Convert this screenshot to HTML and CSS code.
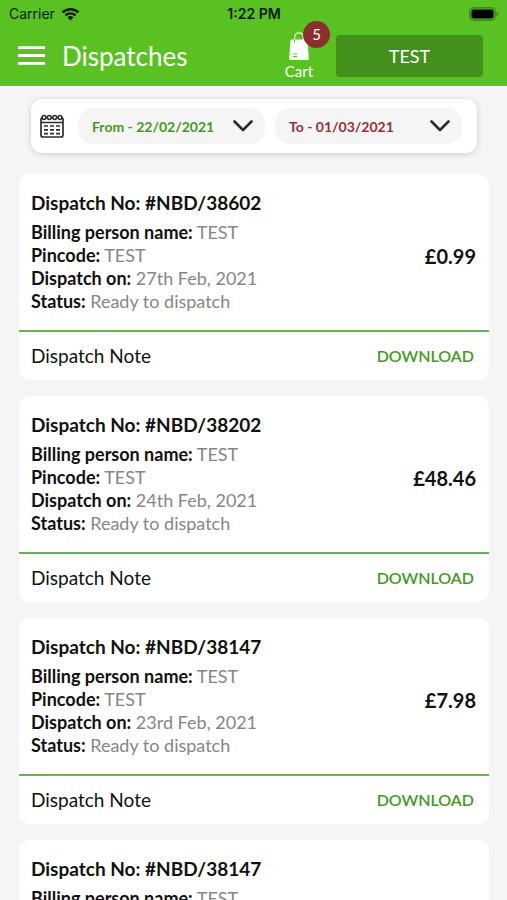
FILE: index.html
```html
<!DOCTYPE html>
<html lang="en">
<head>
<meta charset="utf-8">
<meta name="viewport" content="width=device-width, initial-scale=1">
<title>Dispatches</title>
<link rel="stylesheet" href="styles.css">
</head>
<body>
<div class="app">
  <header class="top">
    <div class="status">
      <span class="carrier">Carrier
        <svg class="wifi" viewBox="0 0 20 14" aria-hidden="true"><path d="M1.6 5.4a12 12 0 0 1 16.8 0M4.7 8.5a7.6 7.6 0 0 1 10.6 0" fill="none" stroke="#0b1a05" stroke-width="2.6"/><path d="M10 13.8 6.9 10.7a4.5 4.5 0 0 1 6.2 0z" fill="#0b1a05"/></svg>
      </span>
      <span class="clock">1:22 PM</span>
      <svg class="battery" viewBox="0 0 30 14" aria-hidden="true"><rect x=".8" y=".8" width="25.4" height="12.4" rx="3.6" fill="none" stroke="#347d14" stroke-width="1.2"/><rect x="2.4" y="2.4" width="22.2" height="9.2" rx="2" fill="#000"/><path d="M27.6 4.6c2 .8 2 4 0 4.8z" fill="#347d14"/></svg>
    </div>
    <div class="bar">
      <button class="menu" aria-label="Menu"><svg viewBox="0 0 27 19" aria-hidden="true"><path d="M0 1.6h27M0 9.5h27M0 17.4h27" stroke="#fff" stroke-width="2.8"/></svg></button>
      <h1>Dispatches</h1>
      <a class="cart" href="#cart">
        <svg viewBox="0 0 20 28" aria-hidden="true"><path d="M5.6 11V5.4c0-6 8.8-6 8.8 0V11" fill="none" stroke="#e4f6da" stroke-width="1.3"/><path d="M2.6 7.4h14.8q1 0 1.1 1l1.3 18q0 1.6-1.6 1.6H1.8Q.2 28 .2 26.400l1.300-18q.1-1 1.100-1z" fill="#fff"/><path d="M5.600 7.400v3.400" stroke="#59c122" stroke-width="1"/><path d="M4 22h4M4 24.500h4" stroke="#59c122" stroke-width="1"/></svg>
        <span>Cart</span>
        <span class="badge">5</span>
      </a>
      <button class="account">TEST</button>
    </div>
  </header>
  <main>
    <section class="filter" aria-label="Date range">
      <svg class="calendar" viewBox="0 0 24 24" aria-hidden="true" fill="none" stroke="#2e2e2e"><rect x="1" y="3.500" width="22" height="19.500" rx="2" stroke-width="1.700"/><path d="M1 8.500h22" stroke-width="1.500"/><g fill="#fff" stroke-width="1.500"><circle cx="4" cy="3.500" r="1.900"/><circle cx="9.300" cy="3.500" r="1.900"/><circle cx="14.700" cy="3.500" r="1.900"/><circle cx="20" cy="3.500" r="1.900"/></g><path d="M4 12h4M10 12h4M16 12h4M4 15.800h4M10 15.800h4M16 15.800h4M4 19.600h4M10 19.600h4M16 19.600h4" stroke-width="1.700"/></svg>
      <button class="date from"><span>From - 22/02/2021</span><svg viewBox="0 0 20 12" aria-hidden="true"><path d="M1.500 1.500 10 10l8.500-8.500"/></svg></button>
      <button class="date to"><span>To - 01/03/2021</span><svg viewBox="0 0 20 12" aria-hidden="true"><path d="M1.500 1.500 10 10l8.500-8.500"/></svg></button>
    </section>
    <article class="card">
      <div class="info">
        <div>
          <h2>Dispatch No: #NBD/38602</h2>
          <p><b>Billing person name:</b> TEST</p>
          <p><b>Pincode:</b> TEST</p>
          <p><b>Dispatch on:</b> 27th Feb, 2021</p>
          <p><b>Status:</b> Ready to dispatch</p>
        </div>
        <strong class="price">£0.99</strong>
      </div>
      <div class="note"><span>Dispatch Note</span><a href="#download">DOWNLOAD</a></div>
    </article>
    <article class="card">
      <div class="info">
        <div>
          <h2>Dispatch No: #NBD/38202</h2>
          <p><b>Billing person name:</b> TEST</p>
          <p><b>Pincode:</b> TEST</p>
          <p><b>Dispatch on:</b> 24th Feb, 2021</p>
          <p><b>Status:</b> Ready to dispatch</p>
        </div>
        <strong class="price">£48.46</strong>
      </div>
      <div class="note"><span>Dispatch Note</span><a href="#download">DOWNLOAD</a></div>
    </article>
    <article class="card">
      <div class="info">
        <div>
          <h2>Dispatch No: #NBD/38147</h2>
          <p><b>Billing person name:</b> TEST</p>
          <p><b>Pincode:</b> TEST</p>
          <p><b>Dispatch on:</b> 23rd Feb, 2021</p>
          <p><b>Status:</b> Ready to dispatch</p>
        </div>
        <strong class="price">£7.98</strong>
      </div>
      <div class="note"><span>Dispatch Note</span><a href="#download">DOWNLOAD</a></div>
    </article>
    <article class="card">
      <div class="info">
        <div>
          <h2>Dispatch No: #NBD/38147</h2>
          <p><b>Billing person name:</b> TEST</p>
        </div>
      </div>
    </article>
  </main>
</div>
</body>
</html>
```
FILE: styles.css
```css
* { box-sizing: border-box; margin: 0; }
body { font-family: Lato, "Liberation Sans", sans-serif; color: #111; background: #f5f5f5; }
button { font: inherit; border: 0; padding: 0; cursor: pointer; }
a { text-decoration: none; }
svg { display: block; flex: none; }

.app { height: 100vh; display: flex; flex-direction: column; overflow: hidden; }

.top { background: #59c122; flex: none; }
.status {
  height: 27px;
  padding: 0 8px 0 9px;
  display: grid;
  grid-template-columns: 1fr auto 1fr;
  align-items: center;
  font-family: Inter, "Liberation Sans", sans-serif;
  font-size: 14px;
  color: #0b1a05;
}
.carrier { display: flex; align-items: center; gap: 6px; }
.wifi { width: 19px; height: 14px; }
.clock { font-weight: 600; }
.battery { width: 30px; height: 14px; justify-self: end; }

.bar { height: 59px; padding: 0 24px 2px 18px; display: flex; align-items: center; color: #fff; }
.menu { background: none; margin-right: 17px; }
.menu svg { width: 27px; height: 19px; }
h1 { font-size: 26px; font-weight: 400; line-height: 32px; flex: 1; }
.cart {
  position: relative;
  width: 30px;
  margin-right: 22px;
  display: flex;
  flex-direction: column;
  align-items: center;
  gap: 2px;
  font-size: 15px;
  line-height: 18px;
  color: #fff;
}
.cart svg { width: 20px; height: 28px; }
.badge {
  position: absolute;
  top: -11px;
  left: 19px;
  width: 27px;
  height: 27px;
  border-radius: 50%;
  background: #8e2f2f;
  text-align: center;
  font-size: 15px;
  line-height: 27px;
}
.account { width: 147px; height: 42px; border-radius: 4px; background: #43911c; color: #fff; font-size: 18px; }

main { flex: 1; min-height: 0; padding: 13px 18px 0 19px; display: flex; flex-direction: column; gap: 16px; overflow: hidden; }
.filter {
  flex: none;
  height: 54px;
  margin: 0 12px 5px;
  padding: 0 15px 0 9px;
  display: flex;
  align-items: center;
  gap: 10px;
  border-radius: 11px;
  background: #fff;
  box-shadow: 0 1px 6px rgba(0, 0, 0, .16);
}
.calendar { width: 24px; height: 24px; margin-right: 4px; }
.date {
  flex: 1;
  height: 36px;
  padding: 0 12px 0 14px;
  display: flex;
  align-items: center;
  justify-content: space-between;
  border-radius: 15px;
  background: #f5f5f5;
  font-size: 14px;
  font-weight: 700;
  white-space: nowrap;
}
.date svg { width: 20px; height: 12px; fill: none; stroke: #2b2b2b; stroke-width: 2.6; stroke-linecap: round; stroke-linejoin: round; }
.from { color: #43991f; }
.to { color: #943035; }

.card { flex: none; border-radius: 11px; background: #fff; }
.info { padding: 15px 13px 17px 12px; display: flex; justify-content: space-between; align-items: center; }
h2 { font-size: 19px; font-weight: 700; line-height: 28px; margin-bottom: 4px; }
p { font-size: 18px; line-height: 23px; color: #868686; }
b { color: #111; font-weight: 700; }
.price { padding-top: 10px; font-size: 20px; line-height: 24px; }
.note {
  height: 50px;
  padding: 0 15px 2px 12px;
  display: flex;
  align-items: center;
  justify-content: space-between;
  border-top: 2px solid #69b155;
  font-size: 19px;
}
.note a { color: #43991f; font-size: 16px; font-weight: 600; }
```
